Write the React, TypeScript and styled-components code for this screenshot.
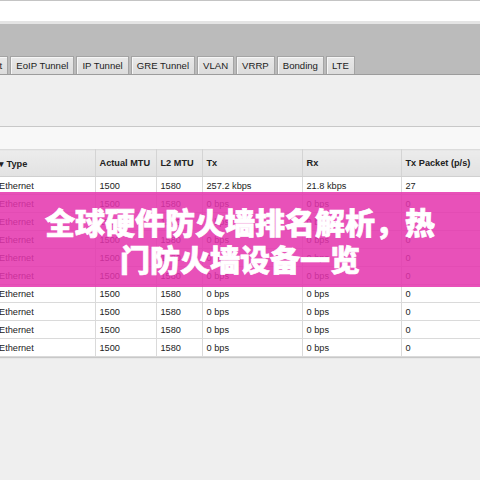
import styled, { createGlobalStyle } from "styled-components";

const GlobalStyle = createGlobalStyle`
  html, body {
    margin: 0;
    padding: 0;
    background: #efefef;
  }
  body {
    font-family: "Liberation Sans", Arial, sans-serif;
    color: #222;
  }
`;

const Page = styled.div`
  position: relative;
  width: 480px;
  height: 480px;
  overflow: hidden;
  background: #efefef;
  display: flex;
  flex-direction: column;
`;

const TopBar = styled.div`
  height: 20px;
  background: #ffffff;
  border-top: 1px solid #c4c4c4;
  border-bottom: 3px solid #e4e4e4;
`;

const TabStrip = styled.div`
  height: 50px;
  background: #bbbbbb;
  border-bottom: 1px solid #9c9c9c;
  display: flex;
  align-items: flex-end;
  gap: 2px;
  margin-left: -40px;
`;

const Tab = styled.div`
  height: 17px;
  padding: 0 5px;
  display: flex;
  align-items: center;
  font-size: 9.6px;
  color: #222;
  white-space: nowrap;
  background: linear-gradient(#e8e8e8, #dcdcdc);
  border: 1px solid #a4a4a4;
  border-bottom: none;
  box-shadow: inset 1px 1px 0 #f6f6f6;
`;

const ToolArea = styled.div`
  height: 51px;
  background: #efefef;
  border-bottom: 1px solid #c8c8c8;
`;

const FilterStrip = styled.div`
  height: 22px;
  background: #f8f8f8;
`;

const TableWrap = styled.div`
  margin-left: -5px;
  width: 530px;
  box-shadow: 0 1px 1px #c8c8c8;
  background: #ffffff;
`;

const Table = styled.table`
  border-collapse: collapse;
  table-layout: fixed;
  width: 530px;
  font-size: 9.2px;
`;

const HeadCell = styled.th<{ $w: number }>`
  box-sizing: border-box;
  width: ${(p) => p.$w}px;
  height: 27px;
  padding: 0 4px;
  text-align: left;
  font-weight: bold;
  color: #222;
  white-space: nowrap;
  overflow: hidden;
  background: linear-gradient(#ececec, #e2e2e2);
  border-top: 1px solid #dcdcdc;
  border-right: 1px solid #d4d4d4;
  border-bottom: 1px solid #d0d0d0;
`;

const Cell = styled.td`
  box-sizing: border-box;
  height: 18px;
  padding: 0 4px;
  white-space: nowrap;
  overflow: hidden;
  color: #222;
  border-right: 1px solid #dadada;
  border-bottom: 1px solid #dadada;
`;

const Banner = styled.div`
  position: absolute;
  left: 0;
  right: 0;
  top: 192px;
  height: 95px;
  padding: 0 40px;
  display: flex;
  align-items: center;
  justify-content: center;
  text-align: center;
  background: rgba(228, 52, 174, 0.86);
  color: #ffffff;
  font-family: "Noto Sans CJK SC", "Noto Sans", sans-serif;
  font-weight: 900;
  font-size: 30px;
  line-height: 37px;
  -webkit-text-stroke: 0.7px #ffffff;
`;

const tabs = [
  "Ethernet",
  "EoIP Tunnel",
  "IP Tunnel",
  "GRE Tunnel",
  "VLAN",
  "VRRP",
  "Bonding",
  "LTE",
];

const columns = [
  { label: "▾ Type", w: 100 },
  { label: "Actual MTU", w: 61 },
  { label: "L2 MTU", w: 46 },
  { label: "Tx", w: 100 },
  { label: "Rx", w: 99 },
  { label: "Tx Packet (p/s)", w: 124 },
];

const rows = [
  ["Ethernet", "1500", "1580", "257.2 kbps", "21.8 kbps", "27"],
  ...Array.from({ length: 9 }, () => [
    "Ethernet",
    "1500",
    "1580",
    "0 bps",
    "0 bps",
    "0",
  ]),
];

export default function App() {
  return (
    <Page>
      <GlobalStyle />
      <TopBar />
      <TabStrip>
        {tabs.map((t) => (
          <Tab key={t}>{t}</Tab>
        ))}
      </TabStrip>
      <ToolArea />
      <FilterStrip />
      <TableWrap>
        <Table>
          <thead>
            <tr>
              {columns.map((c) => (
                <HeadCell key={c.label} $w={c.w}>
                  {c.label}
                </HeadCell>
              ))}
            </tr>
          </thead>
          <tbody>
            {rows.map((r, i) => (
              <tr key={i}>
                {r.map((v, j) => (
                  <Cell key={j}>{v}</Cell>
                ))}
              </tr>
            ))}
          </tbody>
        </Table>
      </TableWrap>
      <Banner>全球硬件防火墙排名解析，热门防火墙设备一览</Banner>
    </Page>
  );
}
